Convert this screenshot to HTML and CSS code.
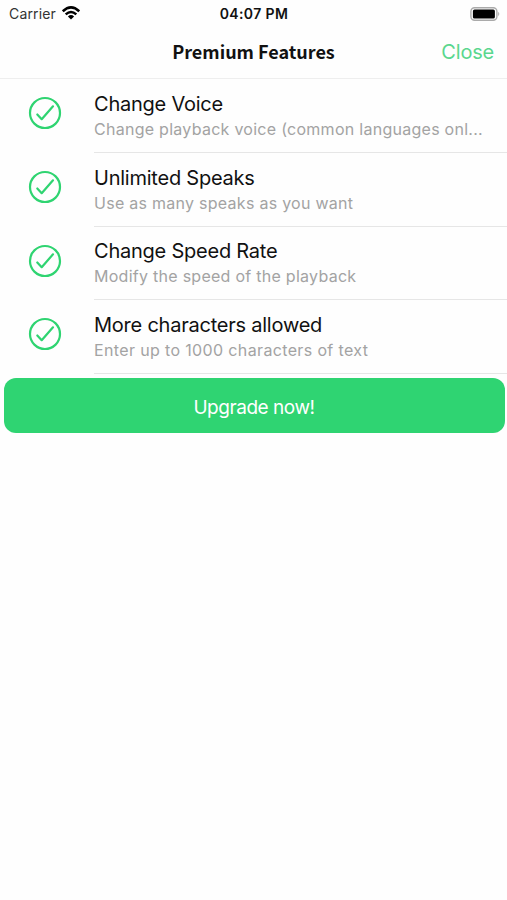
FILE: index.html
```html
<!DOCTYPE html>
<html lang="en">
<head>
<meta charset="utf-8">
<title>Premium Features</title>
<link rel="stylesheet" href="styles.css">
</head>
<body>
<svg class="defs" width="0" height="0" aria-hidden="true">
  <symbol id="check" viewBox="0 0 34 34">
    <circle cx="17" cy="17" r="15"/>
    <path d="M9.300 18.500 13.700 23.200 25 10.300"/>
  </symbol>
</svg>
<header>
  <div class="status">
    <div class="carrier"><span>Carrier</span>
      <svg class="wifi" width="18" height="14" viewBox="0 0 18 14">
        <path d="M.8 5.300Q9-2.500 17.200 5.300M3.700 8.400Q9 3.500 14.300 8.400" fill="none" stroke="#000" stroke-width="2.500"/>
        <path d="M5.900 10.400Q9 7.600 12.100 10.400L9 13.500Z"/>
      </svg>
    </div>
    <div class="time">04:07 PM</div>
    <svg class="battery" width="30" height="14" viewBox="0 0 30 14">
      <rect x=".9" y=".7" width="26" height="12.600" rx="3.700" fill="#fff" stroke="#aaa" stroke-width="1.400"/>
      <rect x="2.900" y="2.500" width="22" height="9" rx="1.600"/>
      <path d="M28.200 4.800Q30.400 7 28.200 9.200Z" fill="#aaa"/>
    </svg>
  </div>
  <div class="nav"><h1>Premium Features</h1><a class="close">Close</a></div>
</header>
<main>
  <ul>
    <li><svg class="check"><use href="#check"/></svg><div class="copy"><h2>Change Voice</h2><p>Change playback voice (common languages onl...</p></div></li>
    <li><svg class="check"><use href="#check"/></svg><div class="copy"><h2>Unlimited Speaks</h2><p>Use as many speaks as you want</p></div></li>
    <li><svg class="check"><use href="#check"/></svg><div class="copy"><h2>Change Speed Rate</h2><p>Modify the speed of the playback</p></div></li>
    <li><svg class="check"><use href="#check"/></svg><div class="copy"><h2>More characters allowed</h2><p class="wide">Enter up to 1000 characters of text</p></div></li>
  </ul>
  <button>Upgrade now!</button>
</main>
</body>
</html>
```
FILE: styles.css
```css
* { box-sizing: border-box; margin: 0; padding: 0; }
body { background: #fefefe; color: #111; font-family: Inter, "Liberation Sans", sans-serif; white-space: nowrap; }
.defs { display: block; }
header { height: 79px; border-bottom: 1px solid #eee; }
.status { height: 27px; display: grid; grid-template-columns: 1fr auto 1fr; align-items: center; padding: 0 7px 0 9px; }
.carrier { display: flex; align-items: center; gap: 6px; font-size: 14px; letter-spacing: .15px; color: #333; }
.wifi { margin-top: -2px; }
.time { font-size: 14px; font-weight: 600; letter-spacing: .4px; margin-right: 1px; }
.battery { justify-self: end; }
.nav { height: 49px; display: grid; grid-template-columns: 1fr auto 1fr; align-items: center; padding: 0 13px 0 14px; }
h1 { grid-column: 2; margin: 0 1px 2px 0; font: 700 18px/28px "Noto Sans CJK SC", sans-serif; }
.close { justify-self: end; font-size: 20px; letter-spacing: -.2px; color: #5ad78e; }
ul { list-style: none; }
li { height: 73.800px; display: flex; }
.check { flex: none; width: 34px; height: 34px; margin: 17px 32px 0 28px; fill: none; stroke: #2fd471; stroke-width: 2.200; stroke-linecap: round; stroke-linejoin: round; }
.copy { flex: 1; border-bottom: 1px solid #e6e6e6; padding-top: 11.800px; }
h2 { font-size: 20px; line-height: 26px; font-weight: 400; letter-spacing: -.23px; }
p { font-size: 16px; line-height: 25.200px; letter-spacing: .27px; color: #a3a3a3; }
.wide { letter-spacing: .36px; }
button { display: block; width: 501px; height: 55px; margin: 4.300px 3.500px 0; border: 0; border-radius: 12px; background: #2fd472; color: #fff; font: 400 19px/57px Inter, sans-serif; letter-spacing: -.45px; padding-top: 1px; }
```
